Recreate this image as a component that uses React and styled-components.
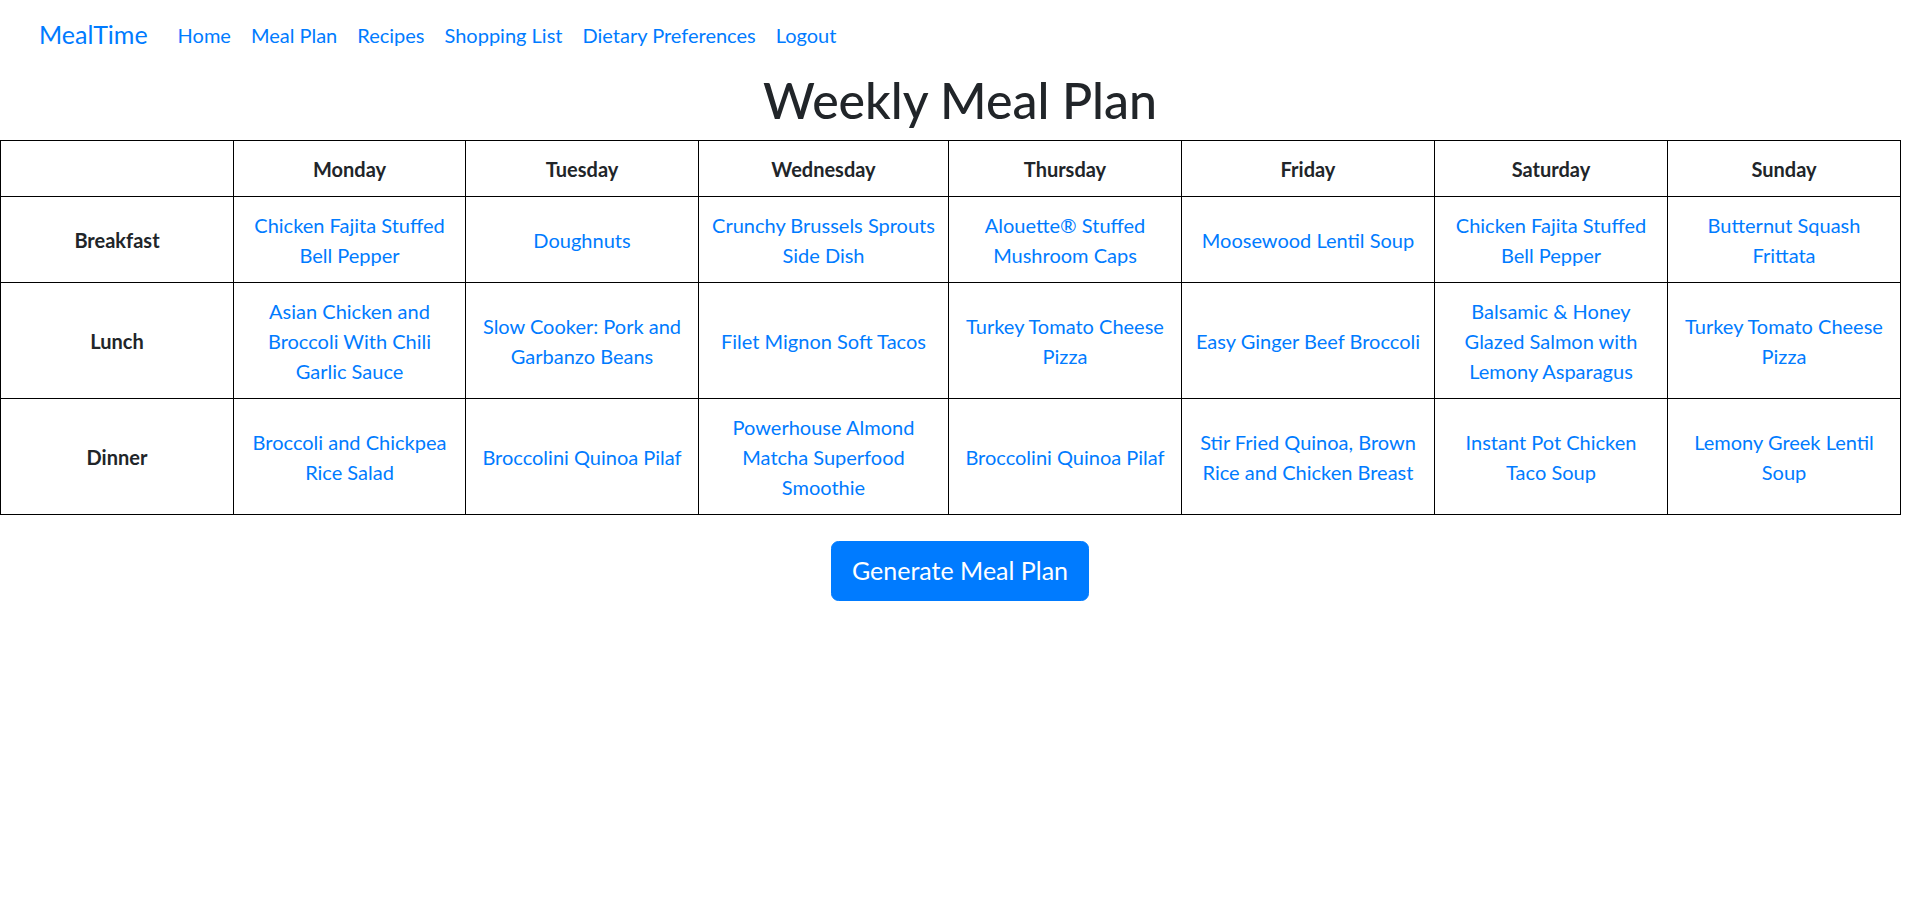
import styled, { createGlobalStyle } from "styled-components";

const days = ["Monday", "Tuesday", "Wednesday", "Thursday", "Friday", "Saturday", "Sunday"];
const widths = [233, 232, 233, 250, 233, 253, 233, 233];

const meals = [
    {
        name: "Breakfast",
        recipes: [
            "Chicken Fajita Stuffed Bell Pepper",
            "Doughnuts",
            "Crunchy Brussels Sprouts Side Dish",
            "Alouette® Stuffed Mushroom Caps",
            "Moosewood Lentil Soup",
            "Chicken Fajita Stuffed Bell Pepper",
            "Butternut Squash Frittata",
        ],
    },
    {
        name: "Lunch",
        recipes: [
            "Asian Chicken and Broccoli With Chili Garlic Sauce",
            "Slow Cooker: Pork and Garbanzo Beans",
            "Filet Mignon Soft Tacos",
            "Turkey Tomato Cheese Pizza",
            "Easy Ginger Beef Broccoli",
            "Balsamic & Honey Glazed Salmon with Lemony Asparagus",
            "Turkey Tomato Cheese Pizza",
        ],
    },
    {
        name: "Dinner",
        recipes: [
            "Broccoli and Chickpea Rice Salad",
            "Broccolini Quinoa Pilaf",
            "Powerhouse Almond Matcha Superfood Smoothie",
            "Broccolini Quinoa Pilaf",
            "Stir Fried Quinoa, Brown Rice and Chicken Breast",
            "Instant Pot Chicken Taco Soup",
            "Lemony Greek Lentil Soup",
        ],
    },
];

export default function App() {
    return (
        <>
            <GlobalStyle />
            <Navbar>
                <Brand href="#">MealTime</Brand>
                <NavLinks>
                    <NavLink href="#">Home</NavLink>
                    <NavLink href="#">Meal Plan</NavLink>
                    <NavLink href="#">Recipes</NavLink>
                    <NavLink href="#">Shopping List</NavLink>
                    <NavLink href="#">Dietary Preferences</NavLink>
                    <NavLink href="#">Logout</NavLink>
                </NavLinks>
            </Navbar>

            <Titulo>Weekly Meal Plan</Titulo>

            <Tabela>
                <thead>
                    <tr>
                        <Cabecalho $width={widths[0]}></Cabecalho>
                        {days.map((day, i) => (
                            <Cabecalho key={day} $width={widths[i + 1]}>{day}</Cabecalho>
                        ))}
                    </tr>
                </thead>
                <tbody>
                    {meals.map((meal) => (
                        <tr key={meal.name}>
                            <Cabecalho as="td">{meal.name}</Cabecalho>
                            {meal.recipes.map((recipe, i) => (
                                <Celula key={i}>
                                    <Receita href="#">{recipe}</Receita>
                                </Celula>
                            ))}
                        </tr>
                    ))}
                </tbody>
            </Tabela>

            <Acoes>
                <BotaoGerar>Generate Meal Plan</BotaoGerar>
            </Acoes>
        </>
    );
}

const GlobalStyle = createGlobalStyle`
body {
    margin: 0;
    font-family: Lato, "Noto Sans", sans-serif;
    font-size: 20px;
    line-height: 1.5;
    color: #212529;
    background: #fff;
}
`;

const Navbar = styled.nav`
    display: flex;
    align-items: center;
    padding: 10px 39px;
`;

const Brand = styled.a`
    font-size: 25px;
    line-height: 37.5px;
    padding: 6px 0;
    margin-right: 20px;
    color: #007bff;
    text-decoration: none;
`;

const NavLinks = styled.div`
    display: flex;
`;

const NavLink = styled.a`
    padding: 10px 10px;
    color: #007bff;
    text-decoration: none;
`;

const Titulo = styled.h1`
    margin: 0 0 10px;
    text-align: center;
    font-size: 50px;
    line-height: 60px;
    font-weight: 500;
    color: #212529;
`;

const Tabela = styled.table`
    width: 1900px;
    border-collapse: collapse;
    table-layout: fixed;

    td, th {
        box-sizing: border-box;
        border: 1px solid #000;
        padding: 12.5px 12px;
        text-align: center;
        vertical-align: middle;
    }
`;

const Cabecalho = styled.th`
    width: ${(p) => (p.$width ? `${p.$width}px` : "auto")};
    font-weight: 700;
    color: #212529;
`;

const Celula = styled.td`
    color: #007bff;
`;

const Receita = styled.a`
    color: #007bff;
    text-decoration: none;
`;

const Acoes = styled.div`
    display: flex;
    justify-content: center;
    margin-top: 26px;
`;

const BotaoGerar = styled.button`
    font-family: Lato, "Noto Sans", sans-serif;
    font-size: 25px;
    line-height: 1.5;
    padding: 10px 20px;
    border: 1px solid #007bff;
    border-radius: 7.5px;
    background-color: #007bff;
    color: #fff;
    cursor: pointer;
`;
